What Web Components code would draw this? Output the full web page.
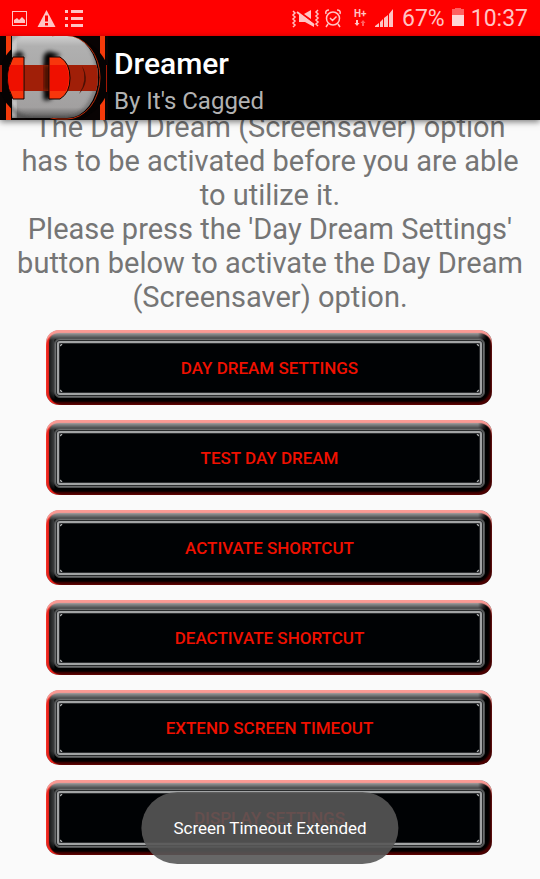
<!DOCTYPE html>
<html lang="en">
<head>
<meta charset="utf-8">
<meta name="viewport" content="width=device-width, initial-scale=1">
<title>Dreamer</title>
<style>
  body {
    margin: 0;
    background: #fafafa;
    font-family: Roboto, sans-serif;
  }
</style>
</head>
<body>
<dream-app>
  <status-bar slot="top" battery="67%" time="10:37"></status-bar>
  <app-header slot="top" heading="Dreamer" byline="By It's Cagged"></app-header>
  <p>The Day Dream (Screensaver) option has to be activated before you are able to utilize it.<br>Please press the 'Day Dream Settings' button below to activate the Day Dream (Screensaver) option.</p>
  <metal-button>DAY DREAM SETTINGS</metal-button>
  <metal-button>TEST DAY DREAM</metal-button>
  <metal-button>ACTIVATE SHORTCUT</metal-button>
  <metal-button>DEACTIVATE SHORTCUT</metal-button>
  <metal-button>EXTEND SCREEN TIMEOUT</metal-button>
  <metal-button>DISPLAY SETTINGS</metal-button>
  <toast-message slot="toast">Screen Timeout Extended</toast-message>
</dream-app>

<script>
class DreamApp extends HTMLElement {
  constructor() {
    super();
    this.attachShadow({ mode: 'open' }).innerHTML = `
      <style>
        :host {
          display: flex;
          flex-direction: column;
          height: 100vh;
          position: relative;
        }

        /* the list is scrolled to its end, so it hangs from the bottom */
        main {
          flex: 1;
          min-height: 0;
          display: flex;
          flex-direction: column;
          justify-content: flex-end;
          gap: 15px;
          padding-bottom: 24px;
          overflow: hidden;
        }

        ::slotted(p) {
          flex: none;
          margin: 0;
          padding: 0 16px 1px;
          font-size: 29px;
          line-height: 34px;
          text-align: center;
          color: #757575;
        }

        ::slotted(metal-button) {
          flex: none;
          margin: 0 48px 0 46px;
        }
      </style>
      <slot name="top"></slot>
      <main><slot></slot></main>
      <slot name="toast"></slot>
    `;
  }
}

class StatusBar extends HTMLElement {
  constructor() {
    super();
    this.attachShadow({ mode: 'open' });
  }

  connectedCallback() {
    this.shadowRoot.innerHTML = `
      <style>
        :host {
          flex: none;
          display: flex;
          align-items: center;
          justify-content: space-between;
          height: 36px;
          padding: 0 12px;
          background: #ff0000;
          color: #ffc4c4;
          font-size: 23px;
          line-height: 36px;
        }

        div {
          display: flex;
          align-items: center;
          gap: 7px;
        }

        span { padding-top: 2px; }

        svg { display: block; }
      </style>
      <div>
        <svg width="72" height="36" viewBox="12 0 72 36" fill="#ffc4c4">
          <rect x="12.5" y="11.5" width="14" height="14" fill="none" stroke="#ffc4c4"/>
          <path d="M14 23v-3l3-2 2 2 3-3 3 3v3z"/>
          <path fill-rule="evenodd" d="M46.500 10l9 17h-18zM45 15.500v6h3v-6zM45 23v2.500h3v-2.500z"/>
          <path d="M65 10h3v3h-3zM65 17h3v3h-3zM65 24h3v3h-3zM71 10h12v3h-12zM71 17h12v3h-12zM71 24h12v3h-12z"/>
        </svg>
      </div>
      <div>
        <svg width="104" height="36" viewBox="292 0 104 36" fill="#ffc4c4">
          <path d="M305 14l7-4v9zM300 15h3l12 9v3l-9-5h-6z"/>
          <path d="M298 12l17 13" stroke="#ffc4c4" stroke-width="2"/>
          <path d="M294 11l2 2-2 2 2 2-2 2 2 2-2 2 2 2-2 2M319 10l-2 2 2 2-2 2 2 2-2 2 2 2-2 2 2 2" fill="none" stroke="#ffc4c4" stroke-width="1.500"/>
          <g fill="none" stroke="#ffc4c4" stroke-width="1.500">
            <circle cx="334" cy="18.500" r="6.500"/>
            <path d="M327 14c-1-3 1-4 3-4M341 14c1-3-1-4-3-4M329 24l-2 3M339 24l2 3M331 18l2.500 2.500 4-4"/>
          </g>
          <text x="355" y="17" font-size="10" font-weight="700">H+</text>
          <path d="M357 20h2v3h1.500l-2.500 3-2.500-3h1.500z"/>
          <path d="M364 20l2.500 3h-1.500v3h-2v-3h-1.500z" fill="#ff6060"/>
          <path d="M376 27v-1l4-3v4zM381 27v-5l3-3v8zM385 27v-9l4-3v12zM390 27v-13l4-5v18z"/>
        </svg>
        <span>${this.getAttribute('battery')}</span>
        <svg width="12" height="36" viewBox="450 0 12 36">
          <path d="M450 9h3v-1h6v1h3v6h-12z" fill="#ff6060"/>
          <path d="M450 15h12v11h-12z" fill="#ffd6d6"/>
        </svg>
        <span>${this.getAttribute('time')}</span>
      </div>
    `;
  }
}

class AppHeader extends HTMLElement {
  constructor() {
    super();
    this.attachShadow({ mode: 'open' });
  }

  connectedCallback() {
    this.shadowRoot.innerHTML = `
      <style>
        :host {
          flex: none;
          display: flex;
          gap: 6px;
          height: 84px;
          background: #000;
          box-shadow: 0 2px 6px rgba(0, 0, 0, 0.5);
          z-index: 1;
        }

        h1, p { margin: 0; }

        h1 {
          padding-top: 8px;
          font-size: 30px;
          line-height: 40px;
          font-weight: 500;
          color: #fff;
        }

        p {
          font-size: 24px;
          line-height: 34px;
          color: #b2b2b2;
        }
      </style>
      <svg width="108" height="84" viewBox="0 0 108 84" aria-hidden="true">
        <defs>
          <linearGradient id="steel" x1="0" y1="0" x2="0" y2="1">
            <stop offset="0" stop-color="#d0d0d0"/>
            <stop offset="0.120" stop-color="#b0b0b0"/>
            <stop offset="0.850" stop-color="#a2a0a0"/>
            <stop offset="1" stop-color="#4c4c4c"/>
          </linearGradient>
          <filter id="soft"><feGaussianBlur stdDeviation="2"/></filter>
          <clipPath id="plate">
            <rect x="12" y="0" width="40" height="82"/>
            <rect x="24" y="0" width="74" height="82" rx="31" ry="41"/>
          </clipPath>
        </defs>
        <rect width="108" height="84" fill="#080303"/>
        <path d="M6 0h5v84h-5zM100 0h5v84h-5z" fill="#f53a0a"/>
        <ellipse cx="54" cy="43" rx="56" ry="46" fill="#050202"/>
        <path d="M0 29h2v27h-2zM106 29h1v27h-1z" fill="#a31805"/>
        <rect x="25" y="0" width="75" height="83" rx="33" ry="42" fill="none" stroke="#b82a08"/>
        <g clip-path="url(#plate)">
          <rect x="12" width="86" height="84" fill="url(#steel)"/>
          <path d="M12 0h3v18l-3 3zM12 64h4v18h-4z" fill="#e4e4e4" filter="url(#soft)"/>
          <rect x="0" y="-8" width="98" height="91" rx="33" ry="46" fill="none" stroke="#3c3c3c" stroke-width="2" filter="url(#soft)"/>
          <path d="M14 20q1-4 7-4l3 5h-12zM44 64V22q0-6 6-6l10 3-9 4v40z" fill="#000" stroke="#000" filter="url(#soft)"/>
          <rect x="24" y="29" width="74" height="26" fill="#a01f08"/>
          <path d="M44 29h6v26h-6z" fill="#3c0a03" filter="url(#soft)"/>
          <path d="M82 30q6 14-3 28 12-13 3-28" fill="#4c1005"/>
        </g>
        <path d="M13 21h11v42h-11q-11-21 0-42z" fill="#f8360c" stroke="#100"/>
        <path d="M49 21h11q10 6 10 21t-10 21h-11z" fill="#f8360c" stroke="#100"/>
        <path d="M10 29h13v26h-13q-4-13 0-26zM50 29h16q6 13 0 26h-16z" fill="#ef1000"/>
      </svg>
      <div>
        <h1>${this.getAttribute('heading')}</h1>
        <p>${this.getAttribute('byline')}</p>
      </div>
    `;
  }
}

class MetalButton extends HTMLElement {
  constructor() {
    super();
    this.attachShadow({ mode: 'open' }).innerHTML = `
      <style>
        :host { display: block; }

        button {
          display: block;
          box-sizing: border-box;
          width: 100%;
          height: 75px;
          padding: 8px 7px 7px 8px;
          border: 0;
          border-radius: 13px;
          background:
            linear-gradient(to left, #000 5px, transparent 14px),
            linear-gradient(#9a9c9d 3px, #3a3c3d 9px, transparent 10px),
            linear-gradient(to top, #000 5px, transparent 14px),
            linear-gradient(to right, #141616 3px, #3c3e3f 8px, transparent 9px),
            #000;
          box-shadow:
            inset 0 3px 1px #fa9a94,
            inset 3px 0 1px #f0241c,
            inset -2px -3px 2px #4c0000;
          font: 500 17px/20px Roboto, sans-serif;
          color: #f01000;
          cursor: pointer;
        }

        .rim {
          display: block;
          box-sizing: border-box;
          height: 100%;
          padding: 4px;
          border: 1px solid #505253;
          border-radius: 6px;
          background: #343637;
          box-shadow:
            inset 0 0 0 1px #6c6e6f,
            inset 0 0 0 2px #2a2c2d,
            inset 0 0 0 4px #a2a4a5;
        }

        /* riveted corners */
        .face {
          display: flex;
          align-items: center;
          justify-content: center;
          height: 100%;
          border-radius: 2px;
          background:
            radial-gradient(circle at 0 0, #55585a 2px, #b4b6b7 3px, transparent 4px),
            radial-gradient(circle at 100% 0, #55585a 2px, #b4b6b7 3px, transparent 4px),
            radial-gradient(circle at 0 100%, #55585a 2px, #b4b6b7 3px, transparent 4px),
            radial-gradient(circle at 100% 100%, #55585a 2px, #b4b6b7 3px, transparent 4px),
            #000204;
          box-shadow: inset 0 0 0 1px #2c2e30;
        }
      </style>
      <button type="button">
        <span class="rim"><span class="face"><slot></slot></span></span>
      </button>
    `;
  }
}

class ToastMessage extends HTMLElement {
  constructor() {
    super();
    this.attachShadow({ mode: 'open' }).innerHTML = `
      <style>
        :host {
          position: absolute;
          bottom: 15px;
          left: 50%;
          transform: translateX(-50%);
          z-index: 2;
          padding: 24px 32px;
          border-radius: 36px;
          background: rgba(86, 86, 86, 0.9);
          color: #fff;
          font-size: 17px;
          line-height: 24px;
          white-space: nowrap;
        }
      </style>
      <div role="status"><slot></slot></div>
    `;
  }
}

customElements.define('dream-app', DreamApp);
customElements.define('status-bar', StatusBar);
customElements.define('app-header', AppHeader);
customElements.define('metal-button', MetalButton);
customElements.define('toast-message', ToastMessage);
</script>
</body>
</html>
